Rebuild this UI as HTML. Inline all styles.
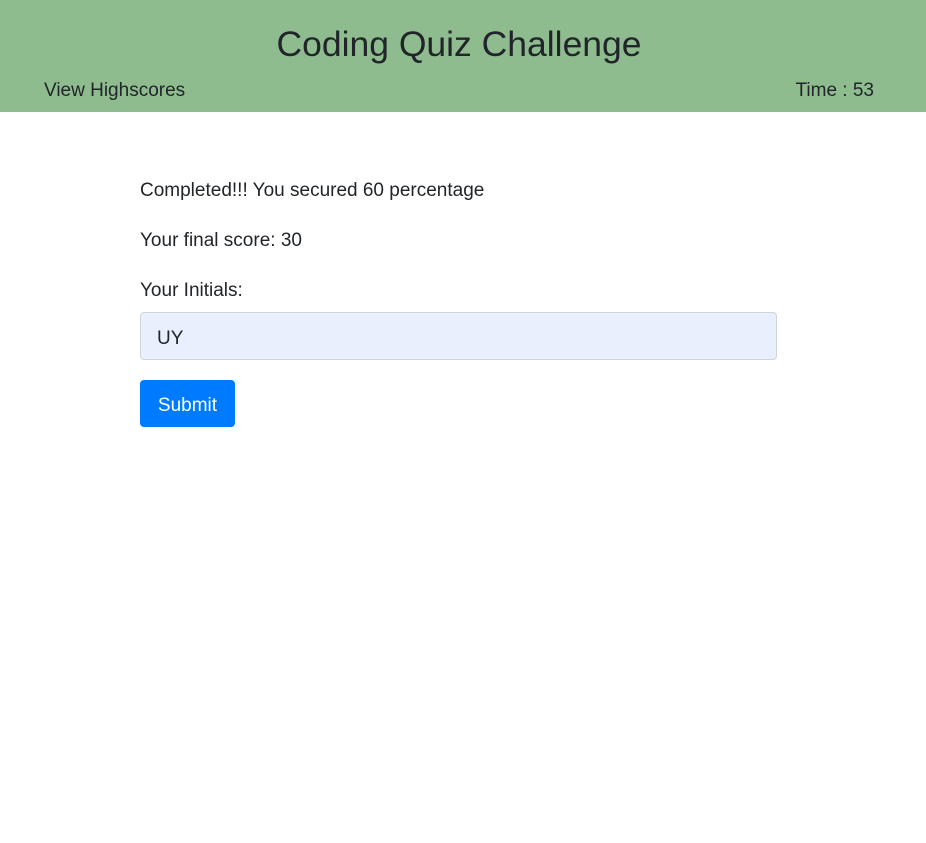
<!DOCTYPE html>
<html><head><style>
body{margin:0;font-family:"Liberation Sans",sans-serif;color:#212529;background:#fff;width:926px;height:843px;overflow:hidden}
.hdr{background:#8fbc8f;height:112px;position:relative}
h1{margin:0;position:absolute;top:24px;left:0;width:918px;text-align:center;font-size:35.5px;font-weight:500;line-height:40px}
.vh{position:absolute;left:44px;top:80px;font-size:19px}
.tm{position:absolute;right:52px;top:80px;font-size:19px}
.c{position:absolute;left:140px;font-size:19px}
.inp{position:absolute;left:140px;top:312px;width:635px;height:46px;border:1px solid #ced4da;border-radius:4px;background:#e8f0fe;font-size:19px;line-height:52px;box-sizing:content-box}
.inp span{margin-left:16px}
.btn{position:absolute;left:140px;top:380px;width:95px;height:47px;background:#007bff;color:#fff;border-radius:4px;font-size:19px;line-height:51px;text-align:center}
</style></head><body>
<div class="hdr"><h1>Coding Quiz Challenge</h1><div class="vh">View Highscores</div><div class="tm">Time : 53</div></div>
<div class="c" style="top:180px">Completed!!! You secured 60 percentage</div>
<div class="c" style="top:230px">Your final score: 30</div>
<div class="c" style="top:280px">Your Initials:</div>
<div class="inp"><span>UY</span></div>
<div class="btn">Submit</div>
</body></html>
